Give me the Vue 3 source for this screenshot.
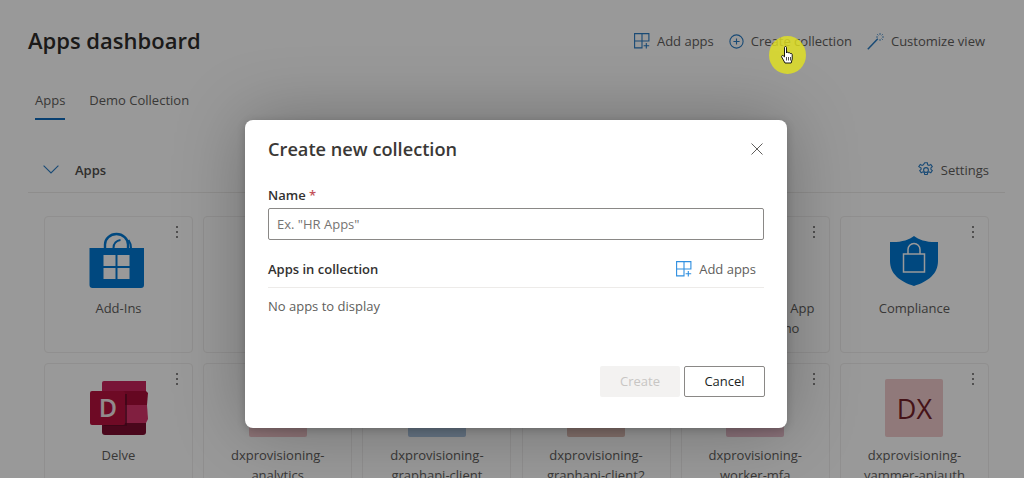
<script setup>
const bottomCards = [
  { name: ['dxprovisioning-', 'analytics'], tile: '#eec4c8', ink: '#7c2630', label: 'DX' },
  { name: ['dxprovisioning-', 'graphapi-client'], tile: '#aec6e2', ink: '#234a80', label: 'DX' },
  { name: ['dxprovisioning-', 'graphapi-client2'], tile: '#dcbcb4', ink: '#7a3a2a', label: 'DX' },
  { name: ['dxprovisioning-', 'worker-mfa'], tile: '#e8bfcc', ink: '#8a2a45', label: 'DX' }
]
const middleTop = [
  [],
  [],
  [],
  ['Provisioning UI App', 'Anton Domino']
]
</script>

<template>
  <div class="page">
    <header class="top">
      <h1 class="title">Apps dashboard</h1>
      <nav class="actions">
        <span class="action">
          <svg width="16" height="16" viewBox="0 0 16 16" fill="none" stroke="#2a7cc4" stroke-width="1.1"><path d="M.6.6h14.300v7.400H.6zM.6 8v6.900H8V.6M12.300 10v5.500M9.600 12.800h5.600"/></svg>
          Add apps
        </span>
        <span class="action">
          <svg width="15" height="15" viewBox="0 0 15 15" fill="none" stroke="#2a7cc4" stroke-width="1.1"><circle cx="7.500" cy="7.500" r="6.600"/><path d="M7.500 4.400v6.200M4.400 7.500h6.200"/></svg>
          Create collection
        </span>
        <span class="action">
          <svg width="17" height="17" viewBox="0 0 17 17" fill="none" stroke="#2a7cc4"><path d="M.8 16.200 10.800 5.800" stroke-width="1.500"/><path d="M13 0v2M13 6v2M9 4h2M15 4h2M10.200 1.200l1.200 1.200M15.800 1.200l-1.200 1.200M15.800 6.800l-1.200-1.200" stroke-width=".8"/></svg>
          Customize view
        </span>
      </nav>
    </header>

    <div class="tabs">
      <span class="tab active">Apps</span>
      <span class="tab">Demo Collection</span>
    </div>

    <div class="section">
      <svg class="chev" width="16" height="9" viewBox="0 0 16 9" fill="none" stroke="#2a7cc4" stroke-width="1.1"><path d="M.6.6 8 8l7.400-7.400"/></svg>
      <span class="section-name">Apps</span>
      <span class="settings">
        <svg width="16" height="16" viewBox="0 0 16 16" fill="none" stroke="#2a7cc4" stroke-width="1.1"><circle cx="8" cy="8" r="2.400"/><path d="M6.700.8h2.600l.4 2 1.300.6 1.800-1 1.500 2.200-1.400 1.300v1.400l1.400 1.300-1.500 2.200-1.800-1-1.300.7-.4 2H6.700l-.4-2-1.300-.7-1.800 1-1.500-2.200 1.400-1.300V6L.8 4.600l1.500-2.200 1.800 1 1.300-.6z"/></svg>
        Settings
      </span>
    </div>

    <div class="grid">
      <div class="card">
        <span class="kebab"><i></i><i></i><i></i></span>
        <svg class="logo bag" width="56" height="56" viewBox="0 0 56 56">
          <path d="M16 15v-3.500a11.500 10.500 0 0 1 23 0V15" fill="none" stroke="#0078d4" stroke-width="2.400"/>
          <path d="M24.500 15c0-4.500 3-7.500 7-8M42 15c0-3-.8-5.500-2.500-8" fill="none" stroke="#0078d4" stroke-width="2"/>
          <path d="M.5 15h54.500v37a3 3 0 0 1-3 3H3.500a3 3 0 0 1-3-3z" fill="#0078d4"/>
          <path d="M14.500 22H26.500V33H14.500zM28.500 22H40.500V33H28.500zM14.500 35H26.500V46H14.500zM28.500 35H40.500V46H28.500z" fill="#fff"/>
        </svg>
        <div class="name">Add-Ins</div>
      </div>
      <div class="card" v-for="(lines, i) in middleTop" :key="'t' + i">
        <span class="kebab"><i></i><i></i><i></i></span>
        <span class="logo tile-space"></span>
        <div class="name"><div v-for="l in lines" :key="l">{{ l }}</div></div>
      </div>
      <div class="card">
        <span class="kebab"><i></i><i></i><i></i></span>
        <svg class="logo" width="48" height="50" viewBox="0 0 48 50">
          <path d="M24 0c5 4 13 6.500 24 6v19c0 13-10 20.500-24 25C10 45.500 0 38 0 25V6c11 .5 19-2 24-6z" fill="#0078d4"/>
          <path d="M18 18v-4.500a6 6 0 0 1 12 0V18M13.500 18h21v18h-21z" fill="none" stroke="#fff" stroke-width="1.500"/>
        </svg>
        <div class="name">Compliance</div>
      </div>

      <div class="card">
        <span class="kebab"><i></i><i></i><i></i></span>
        <svg class="logo" width="58" height="54" viewBox="0 0 58 54">
          <path d="M12 2a2 2 0 0 1 2-2h42v10H12z" fill="#c8245c"/>
          <path d="M12 10h44l2 2-1 12H12z" fill="#a80c38"/>
          <path d="M12 24h45l1 14-2 4H12z" fill="#d8346c"/>
          <path d="M12 42h44v9a3 3 0 0 1-3 3H15a3 3 0 0 1-3-3z" fill="#7c0c30"/>
          <path d="M35 13h2v32H14v-1h21z" fill="#5a0a24" opacity=".7"/>
          <rect x="0" y="10" width="35" height="34" rx="2" fill="#b8123f"/>
          <text x="18" y="36" class="delve-d" text-anchor="middle">D</text>
        </svg>
        <div class="name">Delve</div>
      </div>
      <div class="card" v-for="c in bottomCards" :key="c.name[1]">
        <span class="kebab"><i></i><i></i><i></i></span>
        <div class="logo tile" :style="{ background: c.tile, color: c.ink }">{{ c.label }}</div>
        <div class="name"><div v-for="l in c.name" :key="l">{{ l }}</div></div>
      </div>
      <div class="card">
        <span class="kebab"><i></i><i></i><i></i></span>
        <div class="logo tile dx">DX</div>
        <div class="name"><div>dxprovisioning-</div><div>yammer-apiauth</div></div>
      </div>
    </div>

    <div class="scrim">
      <section class="dialog">
        <div class="dialog-head">
          <h2 class="dialog-title">Create new collection</h2>
          <svg width="12" height="12" viewBox="0 0 12 12" fill="none" stroke="#605e5c" stroke-width="1"><path d="M.5.5l11 11M11.500.5l-11 11"/></svg>
        </div>
        <label class="field-label">Name <span class="req">*</span></label>
        <div class="input">Ex. "HR Apps"</div>
        <div class="apps-head">
          <span class="apps-title">Apps in collection</span>
          <span class="dialog-add">
            <svg width="16" height="16" viewBox="0 0 16 16" fill="none" stroke="#2f8fe0" stroke-width="1.1"><path d="M.6.6h14.300v7.400H.6zM.6 8v6.900H8V.6M12.300 10v5.500M9.600 12.800h5.600"/></svg>
            Add apps
          </span>
        </div>
        <div class="empty">No apps to display</div>
        <div class="buttons">
          <span class="btn disabled">Create</span>
          <span class="btn cancel">Cancel</span>
        </div>
      </section>
    </div>

    <div class="spot">
      <svg width="13" height="18" viewBox="0 0 13 18">
        <path d="M3.500 1.500c0-1.300 2-1.300 2 0V7l.4-.6c.8-.4 1.600-.2 1.800.6.700-.5 1.600-.2 1.700.6.800-.4 1.800 0 1.800 1V13l-1 4H4l-3.300-6c-.5-1 .6-2 1.500-1.300l1.300 1.200z" fill="#fff" stroke="#000" stroke-width=".9"/>
        <path d="M5.500 11v3.500M7.500 11v3.500M9.500 11v3.500" stroke="#000" stroke-width=".7"/>
      </svg>
    </div>
  </div>
</template>

<style scoped>
.page {
  position: relative;
  width: 1024px;
  height: 478px;
  overflow: hidden;
  background: #fff;
  font-family: "Open Sans", "Noto Sans", sans-serif;
  font-size: 13px;
  color: #3a3836;
  box-sizing: border-box;
  padding: 0 19px 0 28px;
}
.top {
  display: flex;
  align-items: center;
  justify-content: space-between;
  height: 80px;
  padding-right: 20px;
}
.title {
  margin: 0;
  font-size: 22px;
  font-weight: 600;
  color: #2e2c2b;
}
.actions {
  display: flex;
  gap: 15px;
  color: #605e5c;
  margin-top: 2px;
}
.action {
  display: flex;
  align-items: center;
  gap: 7px;
}
.tabs {
  display: flex;
  gap: 24px;
  padding-left: 7px;
  height: 40px;
}
.tab {
  padding-top: 11px;
  color: #605e5c;
  box-sizing: border-box;
  height: 40px;
}
.tab.active {
  border-bottom: 2px solid #0f6cbd;
}
.section {
  display: flex;
  align-items: center;
  margin-top: 22px;
  height: 51px;
  padding: 5px 16px 0 15px;
  border-bottom: 1px solid #edebe9;
  box-sizing: border-box;
}
.chev {
  margin-right: 16px;
}
.section-name {
  font-weight: 600;
  color: #504e4c;
}
.settings {
  margin-left: auto;
  display: flex;
  align-items: center;
  gap: 7px;
  color: #605e5c;
}
.grid {
  display: grid;
  grid-template-columns: repeat(6, 149px);
  gap: 10px 10.2px;
  margin: 23px 0 0 16px;
}
.card {
  position: relative;
  height: 137px;
  border: 1px solid #f0efee;
  border-radius: 4px;
  box-sizing: border-box;
  display: flex;
  flex-direction: column;
  align-items: center;
  padding-top: 15px;
}
.kebab {
  position: absolute;
  top: 9px;
  right: 14px;
  display: flex;
  flex-direction: column;
  gap: 3px;
}
.kebab i {
  display: block;
  width: 2px;
  height: 2px;
  border-radius: 50%;
  background: #605e5c;
}
.logo {
  height: 58px;
  flex: none;
  margin-bottom: 9px;
}
.bag {
  margin-right: 4px;
}
.tile-space {
  width: 58px;
}
.tile {
  width: 58px;
  border-radius: 2px;
  display: flex;
  align-items: center;
  justify-content: center;
  font-size: 27px;
}
.dx {
  background: #f0cacc;
  color: #742028;
}
.name {
  text-align: center;
  line-height: 19.5px;
  color: #605e5c;
}
.delve-d {
  font-size: 25px;
  font-weight: 600;
  fill: #f4e8ec;
  font-family: "Open Sans", sans-serif;
}
.scrim {
  position: absolute;
  inset: 0;
  background: rgba(0, 0, 0, 0.4);
  padding: 120px 0 0 245px;
  box-sizing: border-box;
}
.dialog {
  width: 542px;
  height: 308px;
  box-sizing: border-box;
  padding: 14px 23px 31px;
  background: #fff;
  border-radius: 8px;
  box-shadow: 0 0 70px rgba(0, 0, 0, 0.28), 0 2px 8px rgba(0, 0, 0, 0.2);
  display: flex;
  flex-direction: column;
}
.dialog-head {
  display: flex;
  align-items: center;
  justify-content: space-between;
  padding-right: 1px;
  height: 30px;
  margin-bottom: 2px;
}
.dialog-title {
  margin: 0;
  font-size: 18.200px;
  font-weight: 600;
  color: #3a3836;
}
.field-label {
  margin-top: 19px;
  font-weight: 600;
  color: #323130;
  line-height: 20px;
}
.req {
  color: #c4525a;
}
.input {
  margin-top: 3px;
  height: 32px;
  border: 1px solid #8a8886;
  border-radius: 2px;
  box-sizing: border-box;
  line-height: 30px;
  padding-left: 8px;
  color: #767472;
}
.apps-head {
  display: flex;
  align-items: center;
  justify-content: space-between;
  height: 48px;
  padding: 10px 8px 0 0;
  box-sizing: border-box;
  border-bottom: 1px solid #edebe9;
}
.apps-title {
  font-weight: 600;
  color: #323130;
}
.dialog-add {
  display: flex;
  align-items: center;
  gap: 7px;
  color: #605e5c;
}
.empty {
  margin-top: 8px;
  line-height: 20px;
  color: #605e5c;
}
.buttons {
  margin-top: auto;
  display: flex;
  justify-content: flex-end;
  gap: 4px;
  margin-right: -1px;
}
.btn {
  width: 80px;
  height: 31px;
  box-sizing: border-box;
  border-radius: 2px;
  display: flex;
  align-items: center;
  justify-content: center;
  font-weight: 500;
  padding-bottom: 2px;
}
.disabled {
  background: #f3f2f1;
  color: #c8c6c4;
}
.cancel {
  width: 81px;
  border: 1px solid #8a8886;
  color: #201f1e;
}
.spot {
  position: absolute;
  left: 769px;
  top: 36px;
  width: 37px;
  height: 38px;
  border-radius: 50%;
  background: rgba(228, 228, 30, 0.8);
  display: flex;
  align-items: center;
  justify-content: center;
}
</style>
